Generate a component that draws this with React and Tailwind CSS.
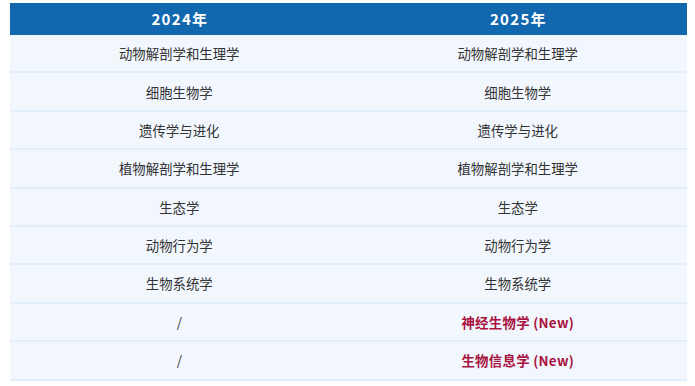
import React from "react";

const rows = [
  ["动物解剖学和生理学", "动物解剖学和生理学", false],
  ["细胞生物学", "细胞生物学", false],
  ["遗传学与进化", "遗传学与进化", false],
  ["植物解剖学和生理学", "植物解剖学和生理学", false],
  ["生态学", "生态学", false],
  ["动物行为学", "动物行为学", false],
  ["生物系统学", "生物系统学", false],
  ["/", "神经生物学 (New)", true],
  ["/", "生物信息学 (New)", true],
];

export default function App() {
  return (
    <div
      className="w-[695px] h-[386px] bg-white pt-[3px] pl-[10px]"
      style={{ fontFamily: '"Noto Sans CJK SC", "Noto Sans", sans-serif' }}
    >
      <div className="w-[677px]">
        <div className="grid grid-cols-2 h-[32px] bg-[#1268ae] text-white font-bold text-[15px]">
          <div className="flex items-center justify-center">
            <span className="tracking-[1.3px]">2024</span>年
          </div>
          <div className="flex items-center justify-center">
            <span className="tracking-[1.3px]">2025</span>年
          </div>
        </div>
        {rows.map(([a, b, isNew], i) => (
          <div
            key={i}
            className="grid grid-cols-2 h-[38.4px] bg-[#f2f7fe] border-b-2 border-[#e3eefb] text-[13.4px] text-[#333333]"
          >
            <div className="flex items-center justify-center">{a}</div>
            <div
              className={
                isNew
                  ? "flex items-center justify-center font-bold text-[#a8123e] tracking-[0.3px]"
                  : "flex items-center justify-center"
              }
            >
              {b}
            </div>
          </div>
        ))}
      </div>
    </div>
  );
}
